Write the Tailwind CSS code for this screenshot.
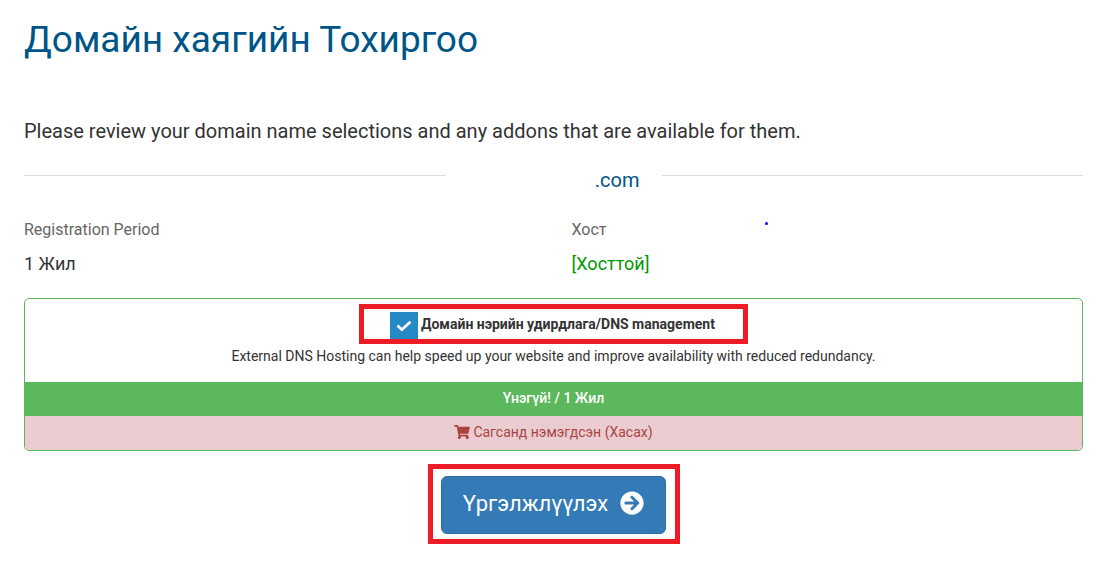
<!DOCTYPE html>
<html lang="mn">
<head>
  <meta charset="UTF-8" />
  <meta name="viewport" content="width=device-width, initial-scale=1.0" />
  <title>Домайн хаягийн Тохиргоо</title>
  <script src="https://cdn.jsdelivr.net/npm/@tailwindcss/browser@4"></script>
</head>
<body class="bg-white text-[#333] font-['Roboto',sans-serif]">
  <main class="pl-6 pr-[27px] pt-4 pb-4">
    <h1 class="text-[37px] leading-12 text-[#058]">Домайн хаягийн Тохиргоо</h1>
    <p class="mt-[53px] text-xl leading-7">Please review your domain name selections and any addons that are available for them.</p>

    <div class="mt-[19px] flex items-center">
      <span class="flex-1 border-t border-[#ddd] mb-2.5"></span>
      <h2 class="w-[216px] pr-[22px] text-right text-xl leading-8 text-[#058]">.com</h2>
      <span class="flex-1 border-t border-[#ddd] mb-2.5"></span>
    </div>

    <dl class="mt-5 grid grid-cols-2 gap-9">
      <div>
        <dt class="text-base leading-7 text-[#666]">Registration Period</dt>
        <dd class="mt-2 text-lg leading-6">1 Жил</dd>
      </div>
      <div class="relative">
        <dt class="text-base leading-7 text-[#666]">Хост</dt>
        <dd class="mt-2 text-lg leading-6 text-[#090]">[Хосттой]</dd>
        <span class="absolute left-[193px] top-1.5 size-[3px] rounded-full bg-[#00f]"></span>
      </div>
    </dl>

    <section class="mt-[22px] rounded-[5px] border border-[#5cb85c] overflow-hidden text-center text-sm">
      <div class="px-4 pt-[5px] pb-4">
        <div class="mx-auto flex h-10 w-[389px] items-start border-5 border-[#ed1c24] pl-[26px] pt-[3px]">
          <label for="dns-management" class="flex items-start gap-[3px] font-bold">
            <span class="grid h-[27px] w-7">
              <input id="dns-management" type="checkbox" checked class="col-start-1 row-start-1 h-[27px] w-7 appearance-none bg-[#2489c5]" />
              <svg class="col-start-1 row-start-1 h-[27px] w-7 pointer-events-none" viewBox="0 0 28 27" fill="none" stroke="#fff" stroke-width="2.6" aria-hidden="true"><path d="M7.500 13.500l4.300 4.200 8.700-8" /></svg>
            </span>
            <span class="leading-6">Домайн нэрийн удирдлага/DNS management</span>
          </label>
        </div>
        <p class="mt-0.5 leading-5">External DNS Hosting can help speed up your website and improve availability with reduced redundancy.</p>
      </div>
      <div class="bg-[#5cb85c] pt-1.5 pb-2 leading-5 font-medium text-white">Үнэгүй! / 1 Жил</div>
      <button type="button" class="flex w-full items-center justify-center gap-[3px] bg-[#ebccd1] pt-1.5 pb-2 leading-5 text-[#a94442]">
        <svg class="h-3.5 w-4" viewBox="0 0 576 512" fill="currentColor" aria-hidden="true"><path d="M528.12 301.319l47.273-208C578.806 78.301 567.391 64 551.99 64H159.208l-9.166-44.81C147.758 8.021 137.93 0 126.529 0H24C10.745 0 0 10.745 0 24v16c0 13.255 10.745 24 24 24h69.883l70.248 343.435C147.325 417.1 136 435.222 136 456c0 30.928 25.072 56 56 56s56-25.072 56-56c0-15.674-6.447-29.835-16.824-40h209.647C430.447 426.165 424 440.326 424 456c0 30.928 25.072 56 56 56s56-25.072 56-56c0-22.172-12.888-41.332-31.579-50.405l5.517-24.276c3.413-15.018-8.002-29.319-23.403-29.319H218.117l-6.545-32h293.145c11.206 0 20.92-7.754 23.403-18.681z" /></svg>
        <span>Сагсанд нэмэгдсэн (Хасах)</span>
      </button>
    </section>

    <div class="mx-auto mt-[13px] flex h-20 w-[252px] justify-center border-5 border-[#ed1c24] pt-[7px]">
      <button type="submit" class="flex h-[58px] w-[225px] items-center justify-center gap-3 rounded-md border border-[#2e6da4] bg-[#337ab7] pb-1 text-[22px] text-white">
        Үргэлжлүүлэх
        <svg class="size-6" viewBox="0 0 512 512" fill="currentColor" aria-hidden="true"><path d="M256 8c137 0 248 111 248 248S393 504 256 504 8 393 8 256 119 8 256 8zm-28.900 143.600l75.500 72.400H120c-13.300 0-24 10.700-24 24v16c0 13.300 10.700 24 24 24h182.600l-75.500 72.400c-9.700 9.300-9.900 24.800-.4 34.300l11 10.900c9.400 9.400 24.600 9.400 33.900 0L404.300 273c9.400-9.400 9.400-24.600 0-33.900L271.600 106.300c-9.400-9.400-24.600-9.400-33.900 0l-11 10.900c-9.500 9.600-9.300 25.100.4 34.400z" /></svg>
      </button>
    </div>
  </main>
</body>
</html>
